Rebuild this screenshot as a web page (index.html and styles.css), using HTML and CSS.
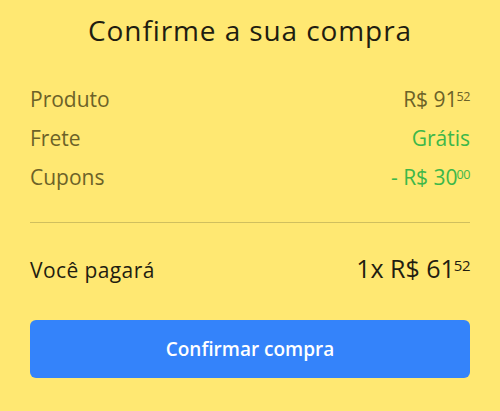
FILE: index.html
```html
<!DOCTYPE html>
<html lang="pt-BR">
<head>
    <meta charset="UTF-8">
    <meta name="viewport" content="width=device-width, initial-scale=1.0">
    <title>Confirme a sua compra</title>
    <link rel="stylesheet" href="styles.css">
</head>
<body>
    <div class="checkout">
        <h1 class="title">Confirme a sua compra</h1>

        <!-- Resumo -->
        <div class="summary">
            <div class="row">
                <span class="label">Produto</span>
                <span class="value">R$ 91<sup>52</sup></span>
            </div>
            <div class="row">
                <span class="label">Frete</span>
                <span class="value green">Grátis</span>
            </div>
            <div class="row">
                <span class="label">Cupons</span>
                <span class="value green">- R$ 30<sup>00</sup></span>
            </div>
        </div>

        <div class="total">
            <span>Você pagará</span>
            <span class="total-value">1x R$ 61<sup>52</sup></span>
        </div>

        <button type="button" class="confirm">Confirmar compra</button>
    </div>
</body>
</html>
```

FILE: styles.css
```css
body {
    background-color: #ffe872;
    font-family: "Open Sans", "Liberation Sans", sans-serif;
    margin: 0;
    color: #1f1d10;
}
.checkout {
    padding: 0 30px;
}
.title {
    font-size: 28px;
    font-weight: 400;
    text-align: center;
    margin: 0;
    padding-top: 12px;
    line-height: 36px;
    letter-spacing: 0.9px;
}
.summary {
    margin-top: 32px;
    padding-bottom: 25px;
    border-bottom: 1px solid #d0bf5e;
}
.row {
    display: flex;
    justify-content: space-between;
    align-items: baseline;
    font-size: 21px;
    line-height: 39px;
    color: #6c6228;
}
.green {
    color: #3db749;
}
sup {
    font-size: 0.6em;
    line-height: 0;
    vertical-align: 0.48em;
    letter-spacing: -0.5px;
    margin-left: -1px;
}
.total {
    display: flex;
    justify-content: space-between;
    align-items: baseline;
    margin-top: 30px;
    font-size: 21px;
    line-height: 30px;
    letter-spacing: 0.4px;
    color: #1f1d10;
}
.total-value {
    font-size: 25px;
    letter-spacing: 0;
}
.confirm {
    display: block;
    width: 100%;
    height: 58px;
    margin-top: 35px;
    background-color: #3483fa;
    color: #ffffff;
    border: none;
    border-radius: 6px;
    font-family: inherit;
    font-size: 19px;
    font-weight: 600;
    cursor: pointer;
}
```
